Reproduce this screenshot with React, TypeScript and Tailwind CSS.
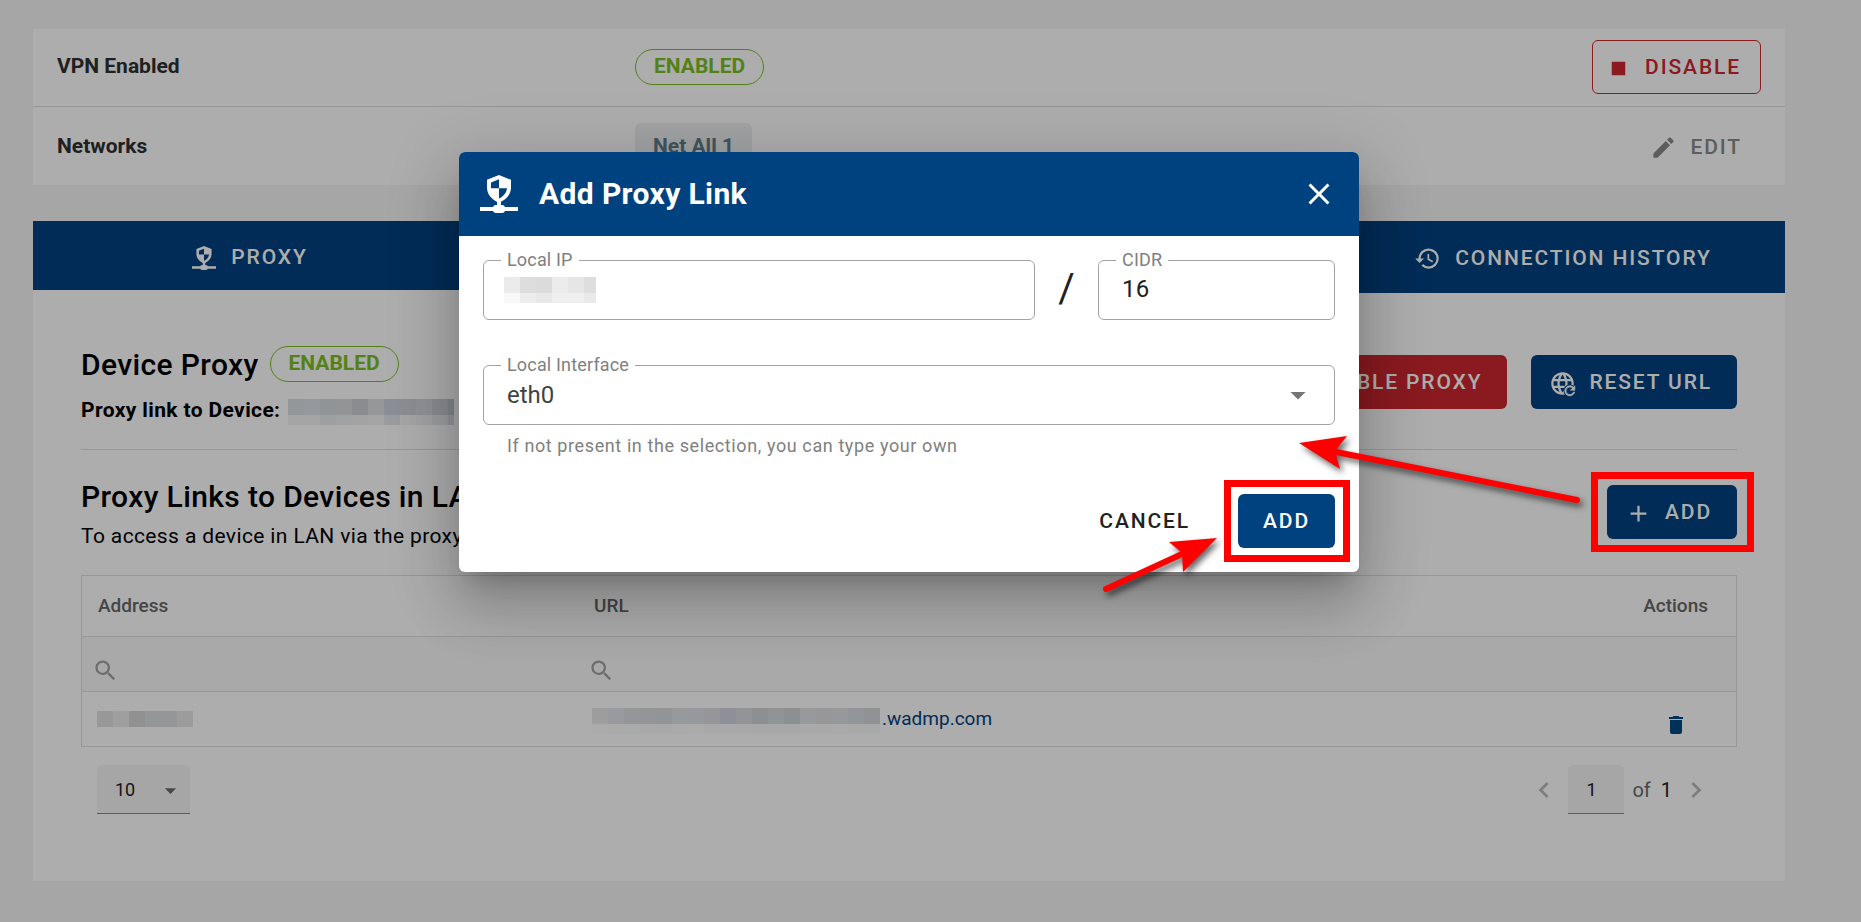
import type { ReactNode } from "react";
import { useState } from "react";
import {
  MdAdd,
  MdArrowDropDown,
  MdChevronLeft,
  MdChevronRight,
  MdClose,
  MdDelete,
  MdEdit,
  MdHistory,
  MdSearch,
  MdStop,
} from "react-icons/md";

const buttonBase =
  "inline-flex h-[54px] shrink-0 items-center rounded-md pt-0.5 text-[21px] font-medium uppercase tracking-[0.0893em]";

function ProxyIcon({ className }: { className: string }) {
  return (
    <svg viewBox="0 0 38 38" className={className} fill="currentColor" aria-hidden="true">
      <path
        fillRule="evenodd"
        d="M19 0 L31 4.800 V12.500 C31 19 26.500 25 19 27.500 C11.500 25 7 19 7 12.500 V4.800 Z M19 4.300 L11 7.500 V13.300 H19 Z M19 13.300 V23.500 C23.500 21.500 26.500 17.800 27 13.300 Z"
      />
      <rect x="17" y="26" width="4" height="6" />
      <rect x="0" y="32" width="38" height="4" />
      <rect x="13" y="30" width="12" height="8" rx="3" />
    </svg>
  );
}

function GlobeRefreshIcon({ className }: { className: string }) {
  return (
    <svg viewBox="0 0 24 24" className={className} fill="currentColor" aria-hidden="true">
      <mask id="globe-cut">
        <rect width="24" height="24" fill="white" />
        <circle cx="18.500" cy="18.500" r="5.600" fill="black" />
      </mask>
      <path
        mask="url(#globe-cut)"
        d="M16.36,14C16.44,13.34 16.5,12.68 16.5,12C16.5,11.32 16.44,10.66 16.36,10H19.74C19.9,10.64 20,11.31 20,12C20,12.69 19.9,13.36 19.74,14M14.59,19.56C15.19,18.45 15.65,17.25 15.97,16H18.92C17.96,17.65 16.43,18.93 14.59,19.56M14.34,14H9.66C9.56,13.34 9.5,12.68 9.5,12C9.5,11.32 9.56,10.65 9.66,10H14.34C14.43,10.65 14.5,11.32 14.5,12C14.5,12.68 14.43,13.34 14.34,14M12,19.96C11.17,18.76 10.5,17.43 10.09,16H13.91C13.5,17.43 12.83,18.76 12,19.96M8,8H5.08C6.03,6.34 7.57,5.06 9.4,4.44C8.8,5.55 8.35,6.75 8,8M5.08,16H8C8.35,17.25 8.8,18.45 9.4,19.56C7.57,18.93 6.03,17.65 5.08,16M4.26,14C4.1,13.36 4,12.69 4,12C4,11.31 4.1,10.64 4.26,10H7.64C7.56,10.66 7.5,11.32 7.5,12C7.5,12.68 7.56,13.34 7.64,14M12,4.03C12.83,5.23 13.5,6.57 13.91,8H10.09C10.5,6.57 11.17,5.23 12,4.03M18.92,8H15.97C15.65,6.75 15.19,5.55 14.59,4.44C16.43,5.07 17.96,6.34 18.92,8M12,2C6.47,2 2,6.5 2,12A10,10 0 0,0 12,22A10,10 0 0,0 22,12A10,10 0 0,0 12,2Z"
      />
      <path
        transform="translate(11.800 11.800) scale(0.56)"
        d="M17.65,6.35C16.2,4.9 14.21,4 12,4A8,8 0 0,0 4,12A8,8 0 0,0 12,20C15.73,20 18.84,17.45 19.73,14H17.65C16.83,16.33 14.61,18 12,18A6,6 0 0,1 6,12A6,6 0 0,1 12,6C13.66,6 15.14,6.69 16.22,7.78L13,11H20V4L17.65,6.35Z"
        stroke="currentColor"
      />
    </svg>
  );
}

function StatusChip() {
  return (
    <span className="inline-flex h-9 items-center rounded-[18px] border border-[#7cbf23] px-[18px] text-[21px] font-bold text-[#7cbf23]">
      ENABLED
    </span>
  );
}

/* Redacted values: every string is the colour of one cell. */
function Redacted({ top, bottom, className = "" }: { top: string[]; bottom?: string[]; className?: string }) {
  return (
    <span className={`inline-flex flex-col overflow-hidden align-top ${className}`} aria-hidden="true">
      <span className="flex">
        {top.map((c, i) => (
          <span key={i} className="h-4 w-4 shrink-0" style={{ backgroundColor: c }} />
        ))}
      </span>
      {bottom && (
        <span className="flex">
          {bottom.map((c, i) => (
            <span key={i} className="h-2.5 w-4 shrink-0" style={{ backgroundColor: c }} />
          ))}
        </span>
      )}
    </span>
  );
}

const ipTop = ["#ebebeb", "#dddddd", "#dbdbdb", "#ececec", "#e6e6e6", "#dedede"];
const ipBottom = ["#f8f8f8", "#ececec", "#e8e8e8", "#efefef", "#efefef", "#e9e9e9"];
const deviceTop = ["#d9dfe4", "#dce1e6", "#d6dadf", "#d7dade", "#cccfd4", "#dcdfe2", "#cdd1db", "#cfd2da", "#d4d8df", "#cccfd6", "#c4c6cc"];
const deviceBottom = ["#f3f3f3", "#f3f3f4", "#e9ebed", "#eeeff0", "#f0f0f0", "#f3f3f3", "#e4e6ec", "#f3f3f4", "#efeff2", "#e6e7ea", "#dcdce2"];
const addressTop = ["#e0e0e0", "#ebebeb", "#d6d6d6", "#dadde2", "#dadfe0", "#e6e6e6"];
const urlTop = ["#e7e7e7", "#e0e4ea", "#dcdde2", "#d9dce2", "#d7dce0", "#dfe3e6", "#dce0e8", "#dddee3", "#d2d5e2", "#d8dbe0", "#d0d4d9", "#d6dadf", "#ced4d8", "#dfe3e6", "#dfdfe3", "#dde2e5", "#d8dce3", "#d5d8de"];
const urlBottom = ["#fcfcfc", "#f9fbf9", "#fafbfb", "#f9faf9", "#f8faf9", "#f9fbf9", "#fcfcfc", "#f9faf9", "#f9faf9", "#f9faf9", "#f7f9f8", "#f7f9f8", "#f7f8f8", "#f9faf9", "#f9faf9", "#fafbfa", "#f9faf9", "#f8faf9"];

function Field({ id, label, children, className }: { id: string; label: string; children: ReactNode; className: string }) {
  return (
    <div className={`relative h-[60px] rounded-md border border-[#a3a3a3] ${className}`}>
      <label
        htmlFor={id}
        className="absolute -top-[13px] left-[17px] bg-white px-1.5 text-[18px] leading-6 tracking-[0.0094em] text-[#808080]"
      >
        {label}
      </label>
      {children}
    </div>
  );
}

function Highlight({ className }: { className: string }) {
  return <span className={`pointer-events-none absolute z-20 border-[7px] border-[#ff0000] ${className}`} />;
}

function VpnCard() {
  return (
    <section className="bg-white">
      <div className="grid h-[78px] grid-cols-[578px_1fr_auto] items-center border-b border-[#dfdfdf] px-6 pb-px">
        <h3 className="text-[21px] font-bold text-[#303030]">VPN Enabled</h3>
        <div className="flex">
          <StatusChip />
        </div>
        <button type="button" className={`${buttonBase} gap-[13px] border border-[#cc2730] pr-[19px] pl-3 text-[#cc2730]`}>
          <MdStop className="size-[27px]" />
          Disable
        </button>
      </div>
      <div className="grid h-[78px] grid-cols-[578px_1fr_auto] items-center px-6 pt-px">
        <h3 className="text-[21px] font-bold text-[#303030]">Networks</h3>
        <div className="flex">
          <span className="inline-flex h-12 items-center rounded-md bg-[#eceff1] px-[18px] text-[21px] font-bold text-[#607d8b]">
            Net All 1
          </span>
        </div>
        <button type="button" className={`${buttonBase} gap-[13px] pr-[19px] pl-3 text-[#8a8a8a]`}>
          <MdEdit className="size-[27px]" />
          Edit
        </button>
      </div>
    </section>
  );
}

function LinksTable() {
  return (
    <table className="w-full table-fixed border-collapse border border-[#dfdfdf]">
      <colgroup>
        <col className="w-[30%]" />
        <col />
        <col className="w-[120px]" />
      </colgroup>
      <thead>
        <tr className="h-[61px] border-b border-[#dfdfdf] text-left text-[19px] text-[#666666]">
          <th className="px-4 font-medium">Address</th>
          <th className="px-4 font-medium">URL</th>
          <th className="pr-7 text-right font-medium">Actions</th>
        </tr>
      </thead>
      <tbody>
        <tr className="h-[55px] border-b border-[#dfdfdf] bg-[#fafafa] text-[#a0a0a0]">
          <td className="px-2.5 pt-3">
            <label className="flex items-center">
              <MdSearch className="size-[27px]" />
              <input aria-label="Filter by address" className="w-40 bg-transparent outline-none" />
            </label>
          </td>
          <td className="px-2.5 pt-3">
            <label className="flex items-center">
              <MdSearch className="size-[27px]" />
              <input aria-label="Filter by URL" className="w-40 bg-transparent outline-none" />
            </label>
          </td>
          <td />
        </tr>
        <tr className="h-[55px]">
          <td className="px-[15px]">
            <div className="flex">
              <Redacted top={addressTop} />
            </div>
          </td>
          <td className="px-3.5">
            <a href="#link" className="flex items-center text-[19px] text-[#004280]">
              <Redacted top={urlTop} bottom={urlBottom} className="pt-1" />
              <span className="pl-0.5">.wadmp.com</span>
            </a>
          </td>
          <td className="pr-12 text-right">
            <button type="button" aria-label="Delete link" className="mt-3 inline-flex align-middle text-[#004a80]">
              <MdDelete className="size-6" />
            </button>
          </td>
        </tr>
      </tbody>
    </table>
  );
}

function Pager() {
  return (
    <div className="mt-[18px] flex items-center justify-between pr-[25px] pl-4 text-[20px]">
      <div className="relative h-[49px] w-[93px] rounded-t-md border-b border-[#8a8a8a] bg-[#f5f5f5]">
        <select aria-label="Rows per page" defaultValue="10" className="size-full appearance-none pl-[18px] text-[18px] text-[#212121]">
          <option>10</option>
        </select>
        <MdArrowDropDown className="pointer-events-none absolute top-3 right-1.5 size-[27px] text-[#6a6a6a]" />
      </div>
      <div className="flex items-center">
        <button type="button" aria-label="Previous page" className="text-[#b8b8b8]">
          <MdChevronLeft className="size-8" />
        </button>
        <input
          aria-label="Page"
          defaultValue="1"
          className="ml-2 h-[49px] w-14 rounded-t-md border-b border-[#8a8a8a] bg-[#f5f5f5] pl-[18px] text-[18px] text-[#212121]"
        />
        <span className="pl-2 text-[#6a6a6a]">of</span>
        <span className="pl-2.5 text-[#212121]">1</span>
        <button type="button" aria-label="Next page" className="ml-2 text-[#b8b8b8]">
          <MdChevronRight className="size-8" />
        </button>
      </div>
    </div>
  );
}

function ProxyPanel() {
  return (
    <section className="mt-9 bg-white pb-[67px]">
      <div className="grid h-[72px] grid-cols-4 bg-[#004280] text-white">
        <button
          type="button"
          className="flex items-center justify-center gap-[15px] border-b-[3px] border-white pt-[5px] pr-1 text-[21px] font-medium tracking-[0.0893em]"
        >
          <ProxyIcon className="size-6" />
          PROXY
        </button>
        <button
          type="button"
          className="col-start-4 flex items-center justify-center gap-3.5 pt-[3px] pr-1.5 text-[21px] font-medium tracking-[0.0893em]"
        >
          <MdHistory className="size-[27px]" />
          CONNECTION HISTORY
        </button>
      </div>
      <div className="px-12">
        <div className="flex items-start justify-between border-b border-[#dfdfdf] pt-[51px] pb-[22px]">
          <div>
            <div className="flex h-10 items-center gap-[11px]">
              <h2 className="text-[30px] font-medium tracking-[0.0125em] text-black">Device Proxy</h2>
              <StatusChip />
            </div>
            <div className="mt-[11px] flex h-8 items-center gap-2">
              <span className="text-[21px] font-bold tracking-[0.0179em] whitespace-nowrap text-black">Proxy link to Device:</span>
              <Redacted top={deviceTop} bottom={deviceBottom} className="w-[166px] pt-px" />
            </div>
          </div>
          <div className="flex gap-6 pt-[11px]">
            <button type="button" className={`${buttonBase} gap-[13px] bg-[#cc2730] pr-[25px] pl-[18px] text-white`}>
              <MdStop className="size-[27px]" />
              Disable Proxy
            </button>
            <button type="button" className={`${buttonBase} gap-[13px] bg-[#004280] pr-[25px] pl-[18px] text-white`}>
              <GlobeRefreshIcon className="size-[27px]" />
              Reset URL
            </button>
          </div>
        </div>
        <div className="flex items-center justify-between pt-[23px] pb-6">
          <div>
            <h2 className="text-[30px] leading-[48px] font-medium tracking-[0.0125em] text-black">Proxy Links to Devices in LAN</h2>
            <p className="text-[21px] leading-[30px] tracking-[0.0179em] text-black">To access a device in LAN via the proxy</p>
          </div>
          <div className="relative flex">
            <button type="button" className={`${buttonBase} gap-[13px] bg-[#004280] pr-[25px] pl-[18px] text-white`}>
              <MdAdd className="size-[27px]" />
              Add
            </button>
            <Highlight className="-top-[13px] -right-[17px] -bottom-[13px] -left-4" />
          </div>
        </div>
        <LinksTable />
        <Pager />
      </div>
    </section>
  );
}

function AddProxyDialog() {
  const [cidr, setCidr] = useState("16");
  const [iface, setIface] = useState("eth0");
  return (
    <div
      role="dialog"
      aria-label="Add Proxy Link"
      className="w-[900px] rounded-md bg-white shadow-[0_17px_23px_-11px_rgba(0,0,0,0.2),0_36px_57px_5px_rgba(0,0,0,0.14),0_14px_69px_12px_rgba(0,0,0,0.12)]"
    >
      <header className="flex h-[84px] items-center rounded-t-md bg-[#004280] pr-[22px] pb-px pl-[21px] text-white">
        <ProxyIcon className="size-[38px]" />
        <h1 className="ml-[21px] flex-1 text-[30px] font-bold tracking-[0.0125em]">Add Proxy Link</h1>
        <button type="button" aria-label="Close">
          <MdClose className="size-9" />
        </button>
      </header>
      <div className="p-6">
        <div className="flex items-center">
          <Field id="local-ip" label="Local IP" className="flex-1">
            <div className="flex h-full items-center pl-5">
              <Redacted top={ipTop} bottom={ipBottom} className="w-[92px]" />
              <input id="local-ip" className="min-w-0 flex-1 outline-none" />
            </div>
          </Field>
          <span className="w-[63px] pb-0.5 text-center text-[40px] leading-none text-[#212121]">/</span>
          <Field id="cidr" label="CIDR" className="w-[237px]">
            <input
              id="cidr"
              value={cidr}
              onChange={(e) => setCidr(e.target.value)}
              className="size-full pb-0.5 pl-[23px] text-[24px] tracking-[0.0094em] text-[#212121] outline-none"
            />
          </Field>
        </div>
        <Field id="iface" label="Local Interface" className="mt-[45px]">
          <input
            id="iface"
            value={iface}
            onChange={(e) => setIface(e.target.value)}
            className="size-full pl-[23px] text-[24px] text-[#424242] outline-none"
          />
          <MdArrowDropDown className="pointer-events-none absolute top-[11px] right-[18px] size-9 text-[#757575]" />
        </Field>
        <p className="mt-[7px] pl-6 text-[18px] leading-7 tracking-[0.0333em] text-[#808080]">
          If not present in the selection, you can type your own
        </p>
        <div className="mt-[34px] flex items-center justify-end gap-6">
          <button type="button" className={`${buttonBase} px-6 text-[#212121]`}>
            Cancel
          </button>
          <div className="relative flex">
            <button type="button" className={`${buttonBase} bg-[#004280] px-[25px] text-white`}>
              Add
            </button>
            <Highlight className="-top-3.5 -right-[15px] -bottom-3.5 -left-3.5" />
          </div>
        </div>
      </div>
    </div>
  );
}

function Arrows() {
  return (
    <svg
      width="1861"
      height="922"
      viewBox="0 0 1861 922"
      className="pointer-events-none absolute top-0 left-0 z-30 drop-shadow-[3px_4px_3px_rgba(0,0,0,0.6)]"
      fill="#ff0000"
      stroke="#ff0000"
      aria-hidden="true"
    >
      <path d="M1577 500 L1336 452" strokeWidth="6" strokeLinecap="round" />
      <path d="M1299 443 L1347 436 L1335 451 L1340 469 Z" stroke="none" />
      <path d="M1106 589 L1182 554" strokeWidth="6" strokeLinecap="round" />
      <path d="M1217 538 L1169 542 L1182 553 L1183 572 Z" stroke="none" />
    </svg>
  );
}

export default function App() {
  return (
    <div className="relative min-h-screen overflow-hidden bg-[#f5f5f5] font-['Roboto',sans-serif]">
      <main className="pt-[29px] pr-[76px] pb-10 pl-[33px]">
        <VpnCard />
        <ProxyPanel />
      </main>
      <div className="absolute inset-0 z-10 flex items-start justify-center bg-black/32 pt-[152px] pr-[43px]">
        <AddProxyDialog />
      </div>
      <Arrows />
    </div>
  );
}
